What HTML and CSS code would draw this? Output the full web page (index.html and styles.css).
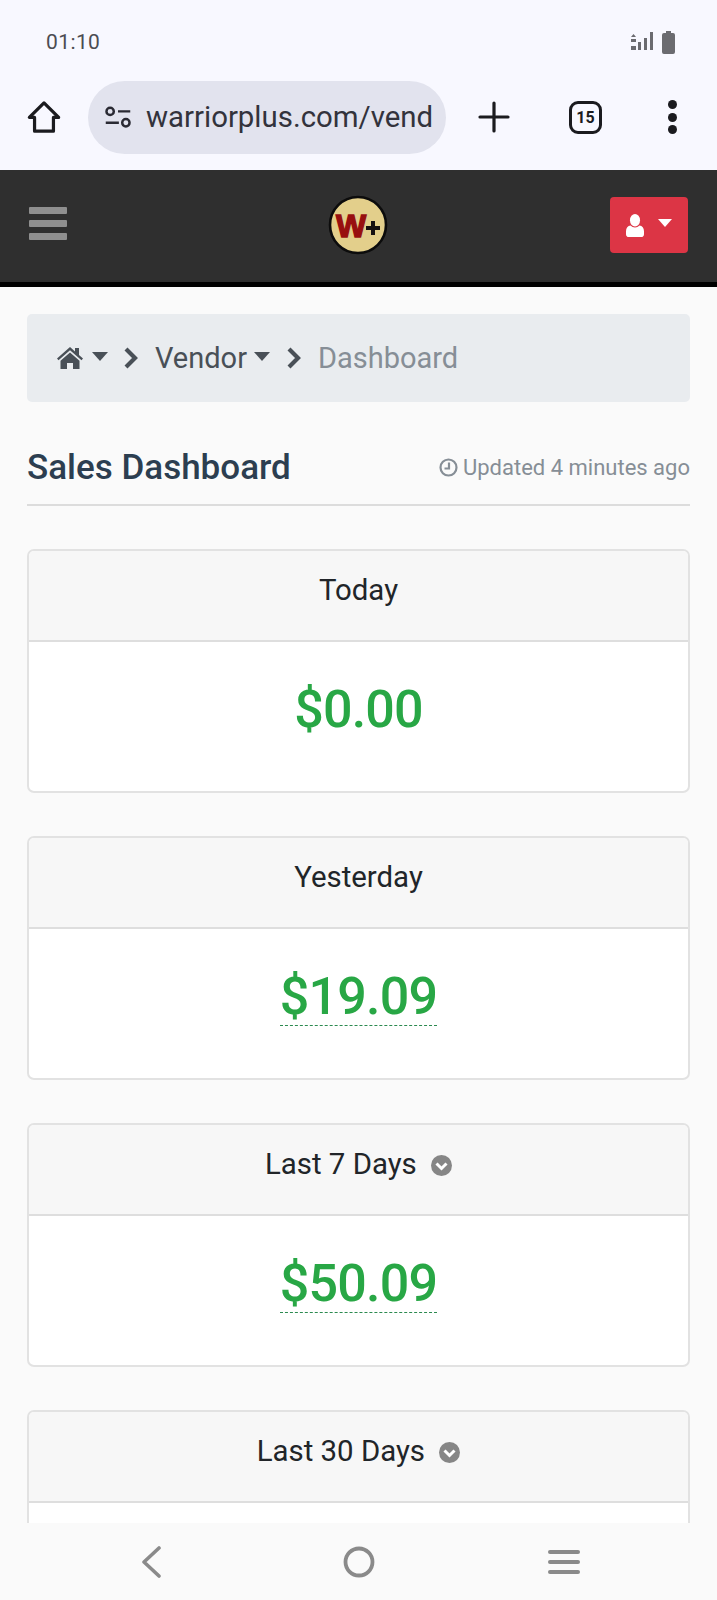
FILE: index.html
```html
<!DOCTYPE html>
<html lang="en">
<head>
    <meta charset="UTF-8">
    <meta name="viewport" content="width=device-width, initial-scale=1.0">
    <title>Sales Dashboard</title>
    <link rel="stylesheet" href="styles.css">
</head>
<body>
    <div class="status-bar">
        <span class="status-time">01:10</span>
        <div class="status-icons">
            <svg width="24" height="22" viewBox="0 0 24 22" fill="#6b6b70">
                <path d="M1 6l2.500-3L6 6zM1 8h5v3H1zM1 15h5v4H1z"/>
                <rect x="8" y="11" width="3" height="8"/>
                <rect x="14" y="7" width="3" height="12"/>
                <rect x="20" y="1" width="3" height="18"/>
            </svg>
            <svg width="13" height="23" viewBox="0 0 13 23" fill="#6b6b70">
                <path d="M4 0h5v2h2a2 2 0 0 1 2 2v17a2 2 0 0 1-2 2H2a2 2 0 0 1-2-2V4a2 2 0 0 1 2-2h2z"/>
            </svg>
        </div>
    </div>

    <div class="toolbar">
        <svg class="tool-home" width="34" height="36" viewBox="0 0 36 36" fill="none" stroke="#1b1b1f" stroke-width="3.400" stroke-linejoin="round" stroke-linecap="round">
            <path d="M18 3L2.500 18.500H8V33H28V18.500H33.500z"/>
        </svg>
        <div class="url-pill">
            <svg width="28" height="25" viewBox="0 0 32 28" fill="none" stroke="#2a2a33" stroke-width="2.800">
                <circle cx="7" cy="7" r="4.200"/>
                <path d="M16 7H30M2 20H17"/>
                <circle cx="25" cy="20" r="4.200"/>
            </svg>
            <span class="url-text">warriorplus.com/vend</span>
        </div>
        <svg class="tool-plus" width="32" height="32" viewBox="0 0 32 32" stroke="#1b1b1f" stroke-width="3.200" stroke-linecap="round">
            <path d="M16 2V30M2 16H30"/>
        </svg>
        <div class="tab-count">15</div>
        <div class="tool-dots"><i></i><i></i><i></i></div>
    </div>

    <nav class="navbar">
        <div class="hamburger"><i></i><i></i><i></i></div>
        <svg class="logo" width="60" height="60" viewBox="0 0 60 60">
            <circle cx="30" cy="30" r="28" fill="#e3cf8b" stroke="#0c0c0c" stroke-width="2.600"/>
            <text x="8" y="42" class="logo-w">W</text>
            <path d="M38 31h5v-5h4v5h5v4h-5v5h-4v-5h-5z" fill="#151010"/>
        </svg>
        <button class="user-button">
            <svg width="18" height="23" viewBox="0 0 20 24" fill="#fff" preserveAspectRatio="none">
                <ellipse cx="10" cy="6.500" rx="5.600" ry="6.500"/>
                <path d="M5 12c1.500 1.400 3 2 5 2s3.500-.6 5-2c3 .4 5 2.500 5 6v3c0 1.700-1.300 3-3 3H3c-1.700 0-3-1.300-3-3v-3c0-3.500 2-5.600 5-6z"/>
            </svg>
            <span class="caret caret-white"></span>
        </button>
    </nav>

    <main class="content">
        <div class="breadcrumb">
            <svg class="crumb-home" width="26" height="22" viewBox="0 0 26 22" fill="#495057">
                <path d="M13 0L0 11.500l1.500 1.700L13 3.300l11.500 9.900 1.500-1.700-4-3.500V1h-4v3.600z"/>
                <path d="M13 5.500L3.500 13.700V22H10v-6h6v6h6.500v-8.300z"/>
            </svg>
            <span class="caret caret-dark caret-home"></span>
            <svg class="crumb-sep" width="15" height="22" viewBox="0 0 15 22" fill="none" stroke="#495057" stroke-width="4.200">
                <path d="M3 2l9 9-9 9"/>
            </svg>
            <span class="crumb-link">Vendor</span>
            <span class="caret caret-dark caret-vendor"></span>
            <svg class="crumb-sep" width="15" height="22" viewBox="0 0 15 22" fill="none" stroke="#495057" stroke-width="4.200">
                <path d="M3 2l9 9-9 9"/>
            </svg>
            <span class="crumb-current">Dashboard</span>
        </div>

        <div class="page-head">
            <h1>Sales Dashboard</h1>
            <span class="updated">
                <svg width="19" height="19" viewBox="0 0 19 19" fill="none" stroke="#868e96" stroke-width="2.200">
                    <circle cx="9.500" cy="9.500" r="8"/>
                    <path d="M10 4.500V10.500H5.500"/>
                </svg>
                Updated 4 minutes ago
            </span>
        </div>

        <section class="card">
            <div class="card-header">Today</div>
            <div class="card-body"><span class="amount">$0.00</span></div>
        </section>

        <section class="card">
            <div class="card-header">Yesterday</div>
            <div class="card-body"><span class="amount amount-dashed">$19.09</span></div>
        </section>

        <section class="card">
            <div class="card-header">
                Last 7 Days
                <svg class="card-toggle" width="21" height="21" viewBox="0 0 21 21">
                    <circle cx="10.500" cy="10.500" r="10.500" fill="#868686"/>
                    <path d="M5.500 8.500l5 5 5-5" fill="none" stroke="#fff" stroke-width="3"/>
                </svg>
            </div>
            <div class="card-body"><span class="amount amount-dashed">$50.09</span></div>
        </section>

        <section class="card">
            <div class="card-header">
                Last 30 Days
                <svg class="card-toggle" width="21" height="21" viewBox="0 0 21 21">
                    <circle cx="10.500" cy="10.500" r="10.500" fill="#868686"/>
                    <path d="M5.500 8.500l5 5 5-5" fill="none" stroke="#fff" stroke-width="3"/>
                </svg>
            </div>
            <div class="card-body"></div>
        </section>
    </main>

    <div class="system-nav">
        <svg width="24" height="32" viewBox="0 0 24 32" fill="none" stroke="#8a8a8a" stroke-width="3.600" stroke-linecap="round" stroke-linejoin="round">
            <path d="M19 2L4 16l15 14"/>
        </svg>
        <svg class="sys-home" width="32" height="32" viewBox="0 0 32 32" fill="none" stroke="#8a8a8a" stroke-width="3.800">
            <circle cx="16" cy="16" r="13.500"/>
        </svg>
        <div class="sys-menu"><i></i><i></i><i></i></div>
    </div>
</body>
</html>
```

FILE: styles.css
```css
body {
    font-family: Roboto, "Liberation Sans", sans-serif;
    margin: 0;
    padding: 0;
    height: 1600px;
    display: flex;
    flex-direction: column;
    overflow: hidden;
    background-color: #fafafa;
}
.status-bar {
    height: 80px;
    background-color: #f8f8ff;
    display: flex;
    justify-content: space-between;
    align-items: center;
    padding: 4px 42px 0 46px;
    box-sizing: border-box;
}
.status-time {
    font-size: 21px;
    letter-spacing: 0.4px;
    color: #4c4c52;
}
.status-icons {
    display: flex;
    align-items: center;
    gap: 8px;
}
.toolbar {
    height: 90px;
    background-color: #f8f8ff;
    display: flex;
    align-items: center;
    padding: 0 0 16px 27px;
    box-sizing: border-box;
}
.url-pill {
    width: 358px;
    height: 73px;
    margin-left: 27px;
    border-radius: 37px;
    background-color: #e2e3ee;
    display: flex;
    align-items: center;
    padding-left: 16px;
    box-sizing: border-box;
    overflow: hidden;
}
.url-text {
    margin-left: 14px;
    font-size: 29.400px;
    color: #33333c;
    white-space: nowrap;
}
.tool-plus {
    margin-left: 32px;
}
.tab-count {
    width: 33px;
    height: 33px;
    margin-left: 59px;
    border: 3.500px solid #1b1b1f;
    border-radius: 9px;
    box-sizing: border-box;
    display: flex;
    align-items: center;
    justify-content: center;
    font-size: 16px;
    font-weight: 700;
    color: #1b1b1f;
}
.tool-dots {
    margin-left: 66px;
    display: flex;
    flex-direction: column;
    gap: 3.500px;
}
.tool-dots i {
    display: block;
    width: 9px;
    height: 9px;
    border-radius: 50%;
    background-color: #1b1b1f;
}
.navbar {
    height: 117px;
    background-color: #2f2f2f;
    border-bottom: 5px solid #000;
    box-sizing: border-box;
    display: flex;
    align-items: center;
    justify-content: space-between;
    padding: 0 29px 2px;
}
.hamburger {
    display: flex;
    flex-direction: column;
    gap: 6px;
    margin-bottom: 4px;
}
.hamburger i {
    display: block;
    width: 38px;
    height: 7px;
    border-radius: 1px;
    background-color: #8f8f8f;
}
.logo {
    margin-left: 38px;
}
.logo-w {
    font-family: "Liberation Sans", sans-serif;
    font-size: 32px;
    font-weight: 700;
    fill: #980f0f;
    stroke: #980f0f;
    stroke-width: 1.400;
}
.user-button {
    width: 78px;
    height: 56px;
    background-color: #dc3545;
    border: none;
    border-radius: 4px;
    display: flex;
    align-items: center;
    justify-content: center;
    gap: 14px;
    padding: 0;
}
.caret {
    display: inline-block;
    width: 0;
    height: 0;
    border-left: 8.500px solid transparent;
    border-right: 8.500px solid transparent;
}
.caret-white {
    border-left-width: 7.500px;
    border-right-width: 7.500px;
    border-top: 8px solid #fff;
    margin-bottom: 4px;
}
.caret-dark {
    border-top: 9px solid #495057;
    margin-bottom: 3px;
}
.content {
    flex: 1;
    min-height: 0;
    overflow: hidden;
    padding: 27px 27px 0;
}
.breadcrumb {
    height: 88px;
    background-color: #e9ecef;
    border-radius: 5px;
    display: flex;
    align-items: center;
    padding-left: 30px;
    font-size: 29px;
}
.caret-home {
    margin-left: 9px;
}
.crumb-sep {
    margin-left: 15px;
}
.crumb-link {
    margin-left: 17px;
    color: #495057;
}
.caret-vendor {
    margin-left: 7px;
}
.caret-vendor + .crumb-sep {
    margin-left: 16px;
}
.crumb-current {
    margin-left: 17px;
    color: #868e96;
}
.page-head {
    display: flex;
    justify-content: space-between;
    align-items: center;
    height: 104px;
    padding-top: 29px;
    box-sizing: border-box;
    border-bottom: 2px solid #dcdcdc;
    margin-bottom: 43px;
}
h1 {
    margin: 0;
    font-size: 35px;
    font-weight: 500;
    color: #2c3e50;
}
.updated {
    font-size: 22px;
    color: #868e96;
    display: flex;
    align-items: center;
    gap: 5px;
}
.card {
    background-color: white;
    border: 2px solid #e2e2e2;
    border-radius: 7px;
    margin-bottom: 43px;
    height: 244px;
    box-sizing: border-box;
    overflow: hidden;
}
.card-header {
    height: 91px;
    background-color: #f7f7f7;
    border-bottom: 2px solid #dedede;
    box-sizing: border-box;
    padding-top: 21px;
    text-align: center;
    font-size: 29.400px;
    line-height: 36px;
    color: #212529;
}
.card-toggle {
    margin-left: 7px;
    vertical-align: -2px;
}
.card-body {
    padding-top: 40px;
    text-align: center;
}
.amount {
    display: inline-block;
    font-size: 52px;
    font-weight: 500;
    letter-spacing: -0.800px;
    line-height: 56px;
    color: #28a745;
}
.amount-dashed {
    border-bottom: 1.500px dashed #2c8a50;
}
.system-nav {
    height: 77px;
    background-color: #fafafa;
    display: flex;
    align-items: center;
    justify-content: space-between;
    padding: 0 137px 0 140px;
    box-sizing: border-box;
}
.sys-home {
    margin-left: 6px;
}
.sys-menu {
    display: flex;
    flex-direction: column;
    gap: 6px;
}
.sys-menu i {
    display: block;
    width: 32px;
    height: 4px;
    border-radius: 2px;
    background-color: #8a8a8a;
}
```
